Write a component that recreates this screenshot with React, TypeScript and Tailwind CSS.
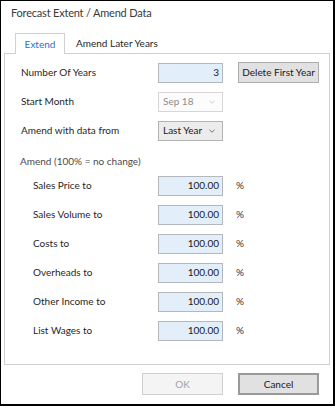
import React from "react";

const FONT = { fontFamily: 'Lato, "Noto Sans", Arial, sans-serif' };

function NumBox({ value }: { value: string }) {
  return (
    <div className="w-[65px] h-[20px] border border-[#b4b8bd] bg-[#e2effa] flex items-center justify-end pr-[3px] text-[#1a1a1a]">
      {value}
    </div>
  );
}

function Combo({ value, disabled }: { value: string; disabled?: boolean }) {
  return (
    <div
      className={`w-[65px] h-[20px] border flex items-center justify-between pl-[4px] pr-[7px] ${
        disabled ? "border-[#d6d6d6] bg-[#fcfcfc] text-[#8d8d8d]" : "border-[#b3b3b3] bg-[#ececec] text-[#1a1a1a]"
      }`}
    >
      <span>{value}</span>
      <svg width="6" height="4" viewBox="0 0 6 4">
        <path d="M0.5 0.8 L3 3.2 L5.5 0.8" fill="none" stroke={disabled ? "#cdcdcd" : "#707070"} strokeWidth="1" />
      </svg>
    </div>
  );
}

const amendRows = ["Sales Price to", "Sales Volume to", "Costs to", "Overheads to", "Other Income to", "List Wages to"];

export default function App() {
  return (
    <div className="w-[335px] h-[406px] bg-white border-t border-l border-r-2 border-b-2 border-black flex flex-col text-[#1f1f1f] text-[10px] whitespace-nowrap" style={FONT}>
      <div className="h-[31px] pl-[10px] pt-[4px] text-[11px] tracking-[-0.2px] text-[#3a3a3a]">Forecast Extent / Amend Data</div>

      <div className="flex h-[21px] items-end pl-[14px]">
        <div className="h-[21px] w-[50px] border border-b-0 border-[#d0d0d0] bg-white flex items-center justify-center text-[#2f6fc0] relative top-px">Extend</div>
        <div className="h-[20px] px-[11px] flex items-center text-[#262626]">Amend Later Years</div>
      </div>

      <div className="mx-[3px] h-[312px] border border-[#d0d0d0] pl-[16px] pt-[4px]">
        <div className="h-[29px] flex items-center">
          <span className="w-[137px]">Number Of Years</span>
          <NumBox value="3" />
          <button className="ml-[15px] w-[81px] h-[21px] border border-[#adadad] bg-[#e1e1e1] text-[#1a1a1a] flex items-center justify-center">
            Delete First Year
          </button>
        </div>
        <div className="h-[29px] flex items-center">
          <span className="w-[137px]">Start Month</span>
          <Combo value="Sep 18" disabled />
        </div>
        <div className="h-[29px] flex items-center">
          <span className="w-[137px]">Amend with data from</span>
          <Combo value="Last Year" />
        </div>

        <div className="mt-[8px] h-[16px] flex items-center text-[#4a4a4a] -ml-[1px]">Amend (100% = no change)</div>

        <div className="mt-[2px] flex flex-col pl-[12px]">
          {amendRows.map(r => (
            <div key={r} className="h-[29px] flex items-center">
              <span className="w-[125px]">{r}</span>
              <NumBox value="100.00" />
              <span className="ml-[13px] text-[#333]">%</span>
            </div>
          ))}
        </div>
      </div>

      <div className="flex justify-end gap-[15px] pr-[14px] pt-[8px]">
        <button className="w-[81px] h-[22px] border border-[#cfcfcf] bg-[#f4f4f4] text-[#a3a3a3]">OK</button>
        <button className="w-[81px] h-[22px] border-2 border-[#9a9a9a] bg-[#e1e1e1] text-[#1a1a1a]">Cancel</button>
      </div>
    </div>
  );
}
